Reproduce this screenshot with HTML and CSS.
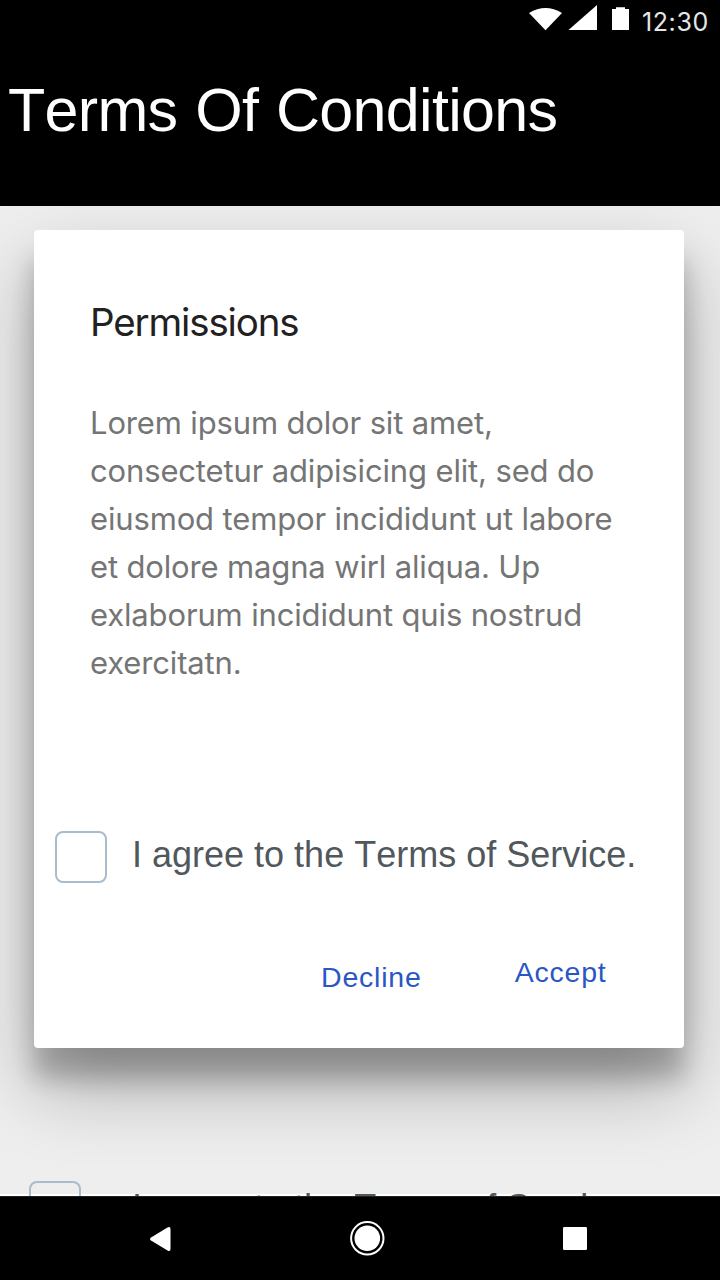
FILE: index.html
```html
<!DOCTYPE html>
<html lang="en">
<head>
<meta charset="utf-8">
<title>Terms Of Conditions</title>
<link rel="stylesheet" href="styles.css">
</head>
<body>
<div class="screen">
  <header class="header">
    <div class="status">
      <svg class="status-icons" width="104" height="32" viewBox="528 4 104 32" fill="#fff" aria-hidden="true">
        <path d="M529 12.9Q545.500 2.900 562 12.900L545.500 30.300Z"/>
        <path d="M597 5V30H568.500Z"/>
        <path d="M616 7.200H625V9H629V30H612V9H616Z"/>
      </svg>
      <span class="clock">12:30</span>
    </div>
    <h1 class="title">Terms Of Conditions</h1>
  </header>
  <main class="content">
    <section class="dialog">
      <h2 class="dialog-title">Permissions</h2>
      <p class="dialog-text">Lorem ipsum dolor sit amet,<br>consectetur adipisicing elit, sed do<br>eiusmod tempor incididunt ut labore<br>et dolore magna wirl aliqua. Up<br>exlaborum incididunt quis nostrud<br>exercitatn.</p>
      <label class="agree"><span class="box"></span><span class="agree-text">I agree to the Terms of Service.</span></label>
      <div class="actions">
        <a class="action">Decline</a>
        <a class="action action-accept">Accept</a>
      </div>
    </section>
    <div class="footer-agree"><span class="box"></span><span class="agree-text">I agree to the Terms of Service.</span></div>
  </main>
  <nav class="nav">
    <svg width="720" height="84" viewBox="0 1196 720 84" fill="#fff" aria-hidden="true">
      <path d="M151 1237.500L167.500 1227.500Q170.500 1226 170.500 1229V1249Q170.500 1252 167.500 1250.500L151 1240.500Q149 1239 151 1237.500Z"/>
      <circle cx="367.300" cy="1238.300" r="16.200" fill="none" stroke="#fff" stroke-width="2"/>
      <circle cx="367.300" cy="1238.300" r="12.800"/>
      <rect x="563" y="1227" width="24" height="23" rx="1.300"/>
    </svg>
  </nav>
</div>
</body>
</html>
```
FILE: styles.css
```css
* { box-sizing: border-box; }
body { margin: 0; font-family: "Liberation Sans", Arial, sans-serif; }
.screen { width: 720px; height: 1280px; display: flex; flex-direction: column; overflow: hidden; background: #eee; }
.header { height: 206px; flex: none; background: #000; color: #fff; }
.status { height: 44px; padding: 4px 11px 0 0; display: flex; justify-content: flex-end; gap: 10px; }
.clock { width: 67px; padding-top: 1px; font: 25px/34px Inter, sans-serif; letter-spacing: 0.6px; color: #e6e6e6; white-space: nowrap; }
.title { margin: 31px 0 0 8px; font-size: 61px; line-height: 70px; font-weight: 400; letter-spacing: -0.7px; word-spacing: 1.6px; font-kerning: none; white-space: nowrap; }
.content { height: 990px; flex: none; padding: 24px 36px 0 34px; overflow: hidden; background: linear-gradient(#eee 988px, #fff 988px); }
.dialog { width: 650px; height: 818px; border-radius: 4px; background: #fff; box-shadow: 0 38px 76px rgba(0,0,0,.3), 0 30px 24px rgba(0,0,0,.22); }
.dialog-title { margin: 0; padding: 68px 0 0 56px; font: 400 38.5px/48px Inter, sans-serif; letter-spacing: -1.15px; color: #212121; }
.dialog-text { margin: 0; padding: 53px 0 0 56px; font: 31px/48px Inter, sans-serif; letter-spacing: -0.15px; color: #757575; white-space: nowrap; }
.box { width: 52px; height: 52px; flex: none; border: 2px solid #a9bccc; border-radius: 8px; }
.agree { display: flex; gap: 25px; padding: 144px 0 0 21px; }
.agree-text { font-size: 36px; line-height: 48px; color: #50585d; font-kerning: none; white-space: nowrap; }
.actions { display: flex; align-items: flex-start; gap: 93px; padding: 69px 0 0 287px; }
.action { font-size: 28.5px; line-height: 40px; letter-spacing: 0.8px; color: #2a56c6; padding-top: 5px; }
.action-accept { padding-top: 0; }
.footer-agree { display: flex; gap: 51px; margin: 133px 0 0 -5px; }
.footer-agree .agree-text { padding-top: 3px; }
.nav { height: 84px; flex: none; background: #000; border-top: 1px solid #222; }
.nav svg { display: block; margin-top: -1px; }
```
